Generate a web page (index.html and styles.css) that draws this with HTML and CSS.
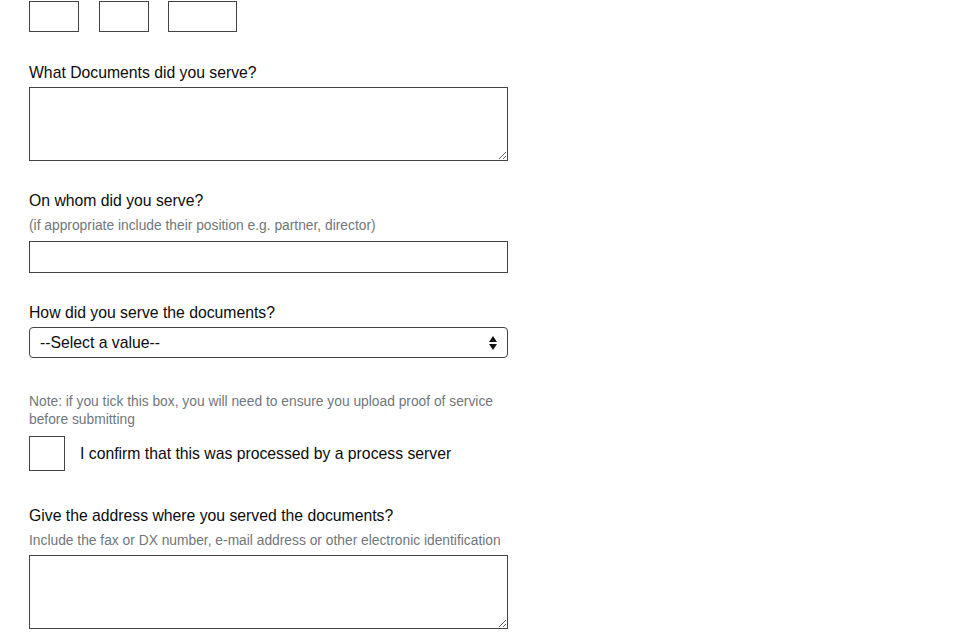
FILE: index.html
```html
<!DOCTYPE html>
<html lang="en">
<head>
    <meta charset="UTF-8">
    <title>Certificate of service</title>
    <link rel="stylesheet" href="styles.css">
</head>
<body>
    <form class="service-form">
        <!-- date of service (day / month / year) -->
        <div class="date-row">
            <input class="date-input date-day" type="text">
            <input class="date-input date-month" type="text">
            <input class="date-input date-year" type="text">
        </div>

        <div class="form-group">
            <label class="field-label" for="documents">What Documents did you serve?</label>
            <textarea class="field-textarea" id="documents"></textarea>
        </div>

        <div class="form-group">
            <label class="field-label" for="served-on">On whom did you serve?</label>
            <p class="field-hint">(if appropriate include their position e.g. partner, director)</p>
            <input class="field-input" id="served-on" type="text">
        </div>

        <div class="form-group">
            <label class="field-label" for="method">How did you serve the documents?</label>
            <div class="select-wrap">
                <select class="field-select" id="method">
                    <option>--Select a value--</option>
                </select>
                <svg class="select-arrow" width="8" height="16" viewBox="0 0 8 16">
                    <path d="M4 1 L8 7 L0 7 Z M0 9 L8 9 L4 15 Z" fill="#111"/>
                </svg>
            </div>
        </div>

        <div class="form-group form-group-check">
            <p class="field-note">Note: if you tick this box, you will need to ensure you upload proof of service before submitting</p>
            <label class="check-row">
                <input class="check-box" type="checkbox">
                <span class="check-label">I confirm that this was processed by a process server</span>
            </label>
        </div>

        <div class="form-group">
            <label class="field-label" for="address">Give the address where you served the documents?</label>
            <p class="field-hint">Include the fax or DX number, e-mail address or other electronic identification</p>
            <textarea class="field-textarea" id="address"></textarea>
        </div>
    </form>
</body>
</html>
```

FILE: styles.css
```css
/* base */
body {
    margin: 0;
    padding: 1px 0 0 29px;
    background: #fff;
    font-family: 'Liberation Sans', Arial, sans-serif;
    color: #0b0c0c;
}

.service-form {
    width: 479px;
}

/* date row */
.date-row {
    display: flex;
    gap: 20px;
    margin-bottom: 30px;
}
.date-input {
    box-sizing: border-box;
    height: 31px;
    margin: 0;
    border: 1px solid #444;
    background: #fff;
}
.date-day,
.date-month {
    width: 50px;
}
.date-year {
    width: 69px;
    margin-left: -1px;
}

/* groups */
.form-group {
    margin-bottom: 29px;
}
.form-group-check {
    margin-top: 34px;
    margin-bottom: 34px;
}

.field-label {
    display: block;
    font-size: 15.75px;
    line-height: 22px;
    margin-bottom: 3px;
}
.field-hint,
.field-note {
    font-size: 13.8px;
    line-height: 18px;
    color: #6f777b;
}
.field-hint {
    margin: 0 0 6px;
    padding-top: 2px;
}
.field-note {
    margin: 0 0 7px;
    padding-top: 1px;
}

/* controls */
.field-textarea,
.field-input,
.field-select {
    box-sizing: border-box;
    display: block;
    width: 100%;
    margin: 0;
    border: 1px solid #444;
    background: #fff;
    font-family: inherit;
    font-size: 15.75px;
    color: #0b0c0c;
}
.field-textarea {
    height: 74px;
    resize: vertical;
}
.field-hint + .field-textarea {
    margin-top: -1px;
}
.field-input {
    height: 32px;
}

.select-wrap {
    position: relative;
}
.field-select {
    height: 31px;
    padding: 0 30px 0 10px;
    border-radius: 4px;
    appearance: none;
    -webkit-appearance: none;
}
.select-arrow {
    position: absolute;
    right: 11px;
    top: 8px;
    pointer-events: none;
}

/* checkbox */
.check-row {
    display: flex;
    align-items: center;
    gap: 15px;
}
.check-box {
    box-sizing: border-box;
    width: 36px;
    height: 35px;
    margin: 0;
    appearance: none;
    -webkit-appearance: none;
    border: 1px solid #444;
    background: #fff;
}
.check-label {
    font-size: 15.75px;
    line-height: 20px;
}
```
